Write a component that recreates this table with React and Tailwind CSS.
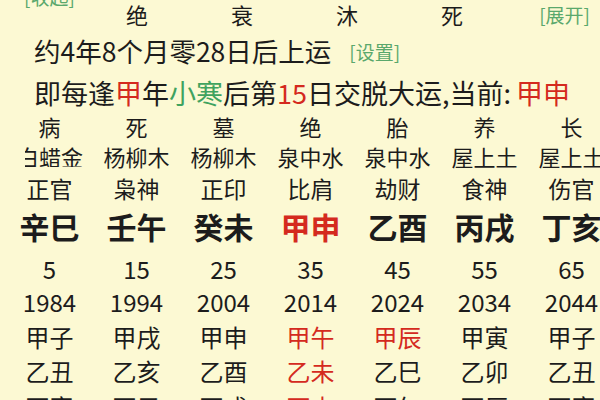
import React from "react";

const changSheng = ["病", "死", "墓", "绝", "胎", "养", "长"];
const naYin = ["白蜡金", "杨柳木", "杨柳木", "泉中水", "泉中水", "屋上土", "屋上土"];
const shiShen = ["正官", "枭神", "正印", "比肩", "劫财", "食神", "伤官"];
const ganZhi = ["辛巳", "壬午", "癸未", "甲申", "乙酉", "丙戌", "丁亥"];
const ages = ["5", "15", "25", "35", "45", "55", "65"];
const years = ["1984", "1994", "2004", "2014", "2024", "2034", "2044"];
const jiaRow = ["甲子", "甲戌", "甲申", "甲午", "甲辰", "甲寅", "甲子"];
const yiRow = ["乙丑", "乙亥", "乙酉", "乙未", "乙巳", "乙卯", "乙丑"];
const bingRow = ["丙寅", "丙子", "丙戌", "丙申", "丙午", "丙辰", "丙寅"];

const Row = ({ items, height, text, red = [] }) => (
  <div className={`grid grid-cols-[repeat(7,87px)] pl-[6px] items-center ${height} ${text}`}>
    {items.map((t, i) => (
      <div
        key={i}
        className={`text-center whitespace-nowrap leading-none ${red.includes(i) ? "text-[#d42a1e]" : "text-[#1c1c1c]"}`}
      >
        {t}
      </div>
    ))}
  </div>
);

const App = () => {
  return (
    <div
      className="w-[600px] h-[400px] overflow-hidden bg-[#fcf9d3] text-[#1c1c1c]"
      style={{ fontFamily: '"Noto Sans CJK SC", "Noto Sans", sans-serif' }}
    >
      {/* line cut off at the top */}
      <div className="h-[20px] -mt-[14px] -mb-[6px] pl-[24px] flex items-center text-[19px] leading-none text-[#5aa86c]">
        [收起]
      </div>

      <div className="h-[28px] flex items-center text-[22px] leading-none">
        <div className="flex gap-[83px] ml-[126px]">
          <span>绝</span>
          <span>衰</span>
          <span>沐</span>
          <span>死</span>
        </div>
        <span className="ml-auto mr-[10px] text-[19px] text-[#5aa86c]">[展开]</span>
      </div>

      <div className="h-[46px] flex items-center pl-[34px] text-[26.5px] leading-none">
        <span>约4年8个月零28日后上运</span>
        <span className="ml-[18px] text-[19px] text-[#5aa86c]">[设置]</span>
      </div>

      <div className="h-[36px] flex items-center pl-[34px] text-[27px] leading-none whitespace-nowrap">
        <span>即每逢</span>
        <span className="text-[#d42a1e]">甲</span>
        <span>年</span>
        <span className="text-[#3fa35f]">小寒</span>
        <span>后第</span>
        <span className="text-[#d42a1e]">15</span>
        <span>日交脱大运,当前:</span>
        <span className="ml-[5px] text-[#d42a1e]">甲申</span>
      </div>

      <Row items={changSheng} height="h-[32px]" text="text-[22px]" />

      <div className="grid grid-cols-[repeat(7,87px)] pl-[6px] items-center h-[28px] text-[22px]">
        {naYin.map((t, i) =>
          i === 0 ? (
            <div key={i} className="ml-[19px] w-[58px] flex justify-end overflow-hidden whitespace-nowrap leading-none">
              <span className="shrink-0">{t}</span>
            </div>
          ) : (
            <div key={i} className="text-center whitespace-nowrap leading-none">
              {t}
            </div>
          )
        )}
      </div>

      <Row items={shiShen} height="h-[36px]" text="text-[23px]" />
      <Row items={ganZhi} height="h-[44px] pb-[4px]" text="text-[30px] font-bold" red={[3]} />
      <Row items={ages} height="h-[38px]" text="text-[24px]" />
      <Row items={years} height="h-[28px]" text="text-[24px]" />
      <Row items={jiaRow} height="h-[42px]" text="text-[24px]" red={[3, 4]} />
      <Row items={yiRow} height="h-[28px] pb-[2px]" text="text-[24px]" red={[3]} />
      <Row items={bingRow} height="h-[42px]" text="text-[24px]" red={[3]} />
    </div>
  );
};

export default App;
